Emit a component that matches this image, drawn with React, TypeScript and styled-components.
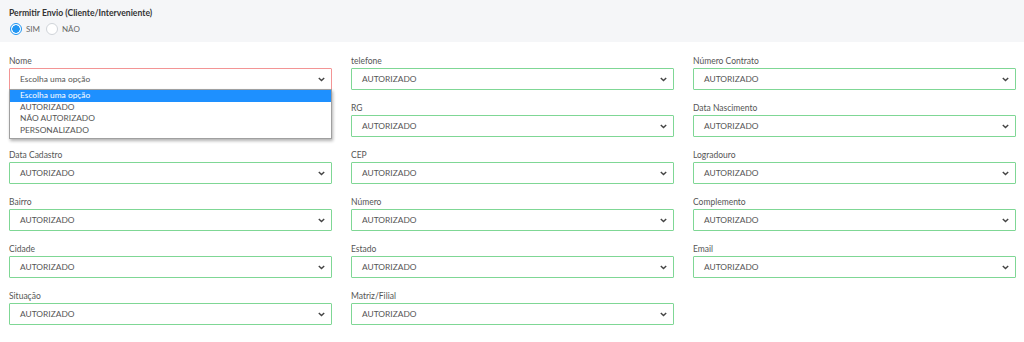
import React from "react";
import styled, { createGlobalStyle } from "styled-components";

const GlobalStyle = createGlobalStyle`
  html, body {
    margin: 0;
    padding: 0;
    background: #ffffff;
    font-family: "Lato", "Open Sans", sans-serif;
  }
`;

type Field = {
  label: string;
  value: string;
  invalid?: boolean;
  open?: boolean;
  covered?: boolean;
};

const options = ["Escolha uma opção", "AUTORIZADO", "NÃO AUTORIZADO", "PERSONALIZADO"];

const fields: Field[] = [
  { label: "Nome", value: "Escolha uma opção", invalid: true, open: true },
  { label: "telefone", value: "AUTORIZADO" },
  { label: "Número Contrato", value: "AUTORIZADO" },
  { label: "", value: "", covered: true },
  { label: "RG", value: "AUTORIZADO" },
  { label: "Data Nascimento", value: "AUTORIZADO" },
  { label: "Data Cadastro", value: "AUTORIZADO" },
  { label: "CEP", value: "AUTORIZADO" },
  { label: "Logradouro", value: "AUTORIZADO" },
  { label: "Bairro", value: "AUTORIZADO" },
  { label: "Número", value: "AUTORIZADO" },
  { label: "Complemento", value: "AUTORIZADO" },
  { label: "Cidade", value: "AUTORIZADO" },
  { label: "Estado", value: "AUTORIZADO" },
  { label: "Email", value: "AUTORIZADO" },
  { label: "Situação", value: "AUTORIZADO" },
  { label: "Matriz/Filial", value: "AUTORIZADO" },
];

const Chevron = () => (
  <svg width="7" height="5" viewBox="0 0 7 5">
    <path d="M0.8 0.9 L3.5 3.6 L6.2 0.9" fill="none" stroke="#444" strokeWidth="1.4" />
  </svg>
);

const App: React.FC = () => {
  return (
    <>
      <GlobalStyle />
      <Page>
        <TopBar>
          <Title>Permitir Envio (Cliente/Interveniente)</Title>
          <RadioRow>
            <RadioOption>
              <RadioCircle checked />
              <RadioText>SIM</RadioText>
            </RadioOption>
            <RadioOption>
              <RadioCircle />
              <RadioText>NÃO</RadioText>
            </RadioOption>
          </RadioRow>
        </TopBar>
        <Grid>
          {fields.map((f, i) =>
            f.covered ? (
              <FieldBox key={i} />
            ) : (
              <FieldBox key={i}>
                <Label>{f.label}</Label>
                <SelectBox invalid={!!f.invalid}>
                  <SelectText>{f.value}</SelectText>
                  <Chevron />
                </SelectBox>
                {f.open && (
                  <Menu>
                    {options.map((o, j) => (
                      <MenuItem key={o} active={j === 0}>{o}</MenuItem>
                    ))}
                  </Menu>
                )}
              </FieldBox>
            )
          )}
        </Grid>
      </Page>
    </>
  );
};

const Page = styled.div`
  width: 1024px;
  height: 342px;
  background: #ffffff;
  overflow: hidden;
`;

const TopBar = styled.div`
  background: #f5f6f8;
  height: 42px;
  box-sizing: border-box;
  padding: 7px 9px 0 9px;
`;

const Title = styled.div`
  font-size: 8.6px;
  font-weight: 700;
  color: #333;
  line-height: 12px;
`;

const RadioRow = styled.div`
  display: flex;
  gap: 5px;
  margin-top: 4px;
`;

const RadioOption = styled.div`
  display: flex;
  align-items: center;
  gap: 4px;
`;

const RadioCircle = styled.span<{ checked?: boolean }>`
  width: 12px;
  height: 12px;
  box-sizing: border-box;
  border-radius: 50%;
  border: 1px solid ${({ checked }) => (checked ? "#2196f3" : "#d0d4d9")};
  background: ${({ checked }) =>
    checked ? "radial-gradient(circle, #2196f3 0 3.5px, #fff 4px)" : "#fff"};
  margin-left: 1px;
`;

const RadioText = styled.span`
  font-size: 8px;
  color: #666;
  line-height: 12px;
`;

const Grid = styled.div`
  display: grid;
  grid-template-columns: repeat(3, 323px);
  column-gap: 19px;
  row-gap: 12px;
  padding: 13px 10px 0 9px;
`;

const FieldBox = styled.div`
  position: relative;
  min-height: 35px;
`;

const Label = styled.div`
  font-size: 8.5px;
  color: #555;
  line-height: 13px;
`;

const SelectBox = styled.div<{ invalid: boolean }>`
  height: 22px;
  box-sizing: border-box;
  border: 1px solid ${({ invalid }) => (invalid ? "#f39595" : "#7fd795")};
  border-radius: 1px;
  display: flex;
  align-items: center;
  justify-content: space-between;
  padding: 0 6px 0 10px;
  background: #fff;
`;

const SelectText = styled.span`
  font-size: 8.4px;
  color: #555;
`;

const Menu = styled.div`
  position: absolute;
  left: 0;
  right: 0;
  top: 34px;
  background: #fff;
  border: 1px solid #a0a0a0;
  box-shadow: 1px 2px 3px rgba(0, 0, 0, 0.3);
  z-index: 5;
  padding-bottom: 1px;
`;

const MenuItem = styled.div<{ active: boolean }>`
  font-size: 8.4px;
  line-height: 11.7px;
  padding-left: 10px;
  color: ${({ active }) => (active ? "#fff" : "#555")};
  background: ${({ active }) => (active ? "#1e90ff" : "transparent")};
`;

export default App;
